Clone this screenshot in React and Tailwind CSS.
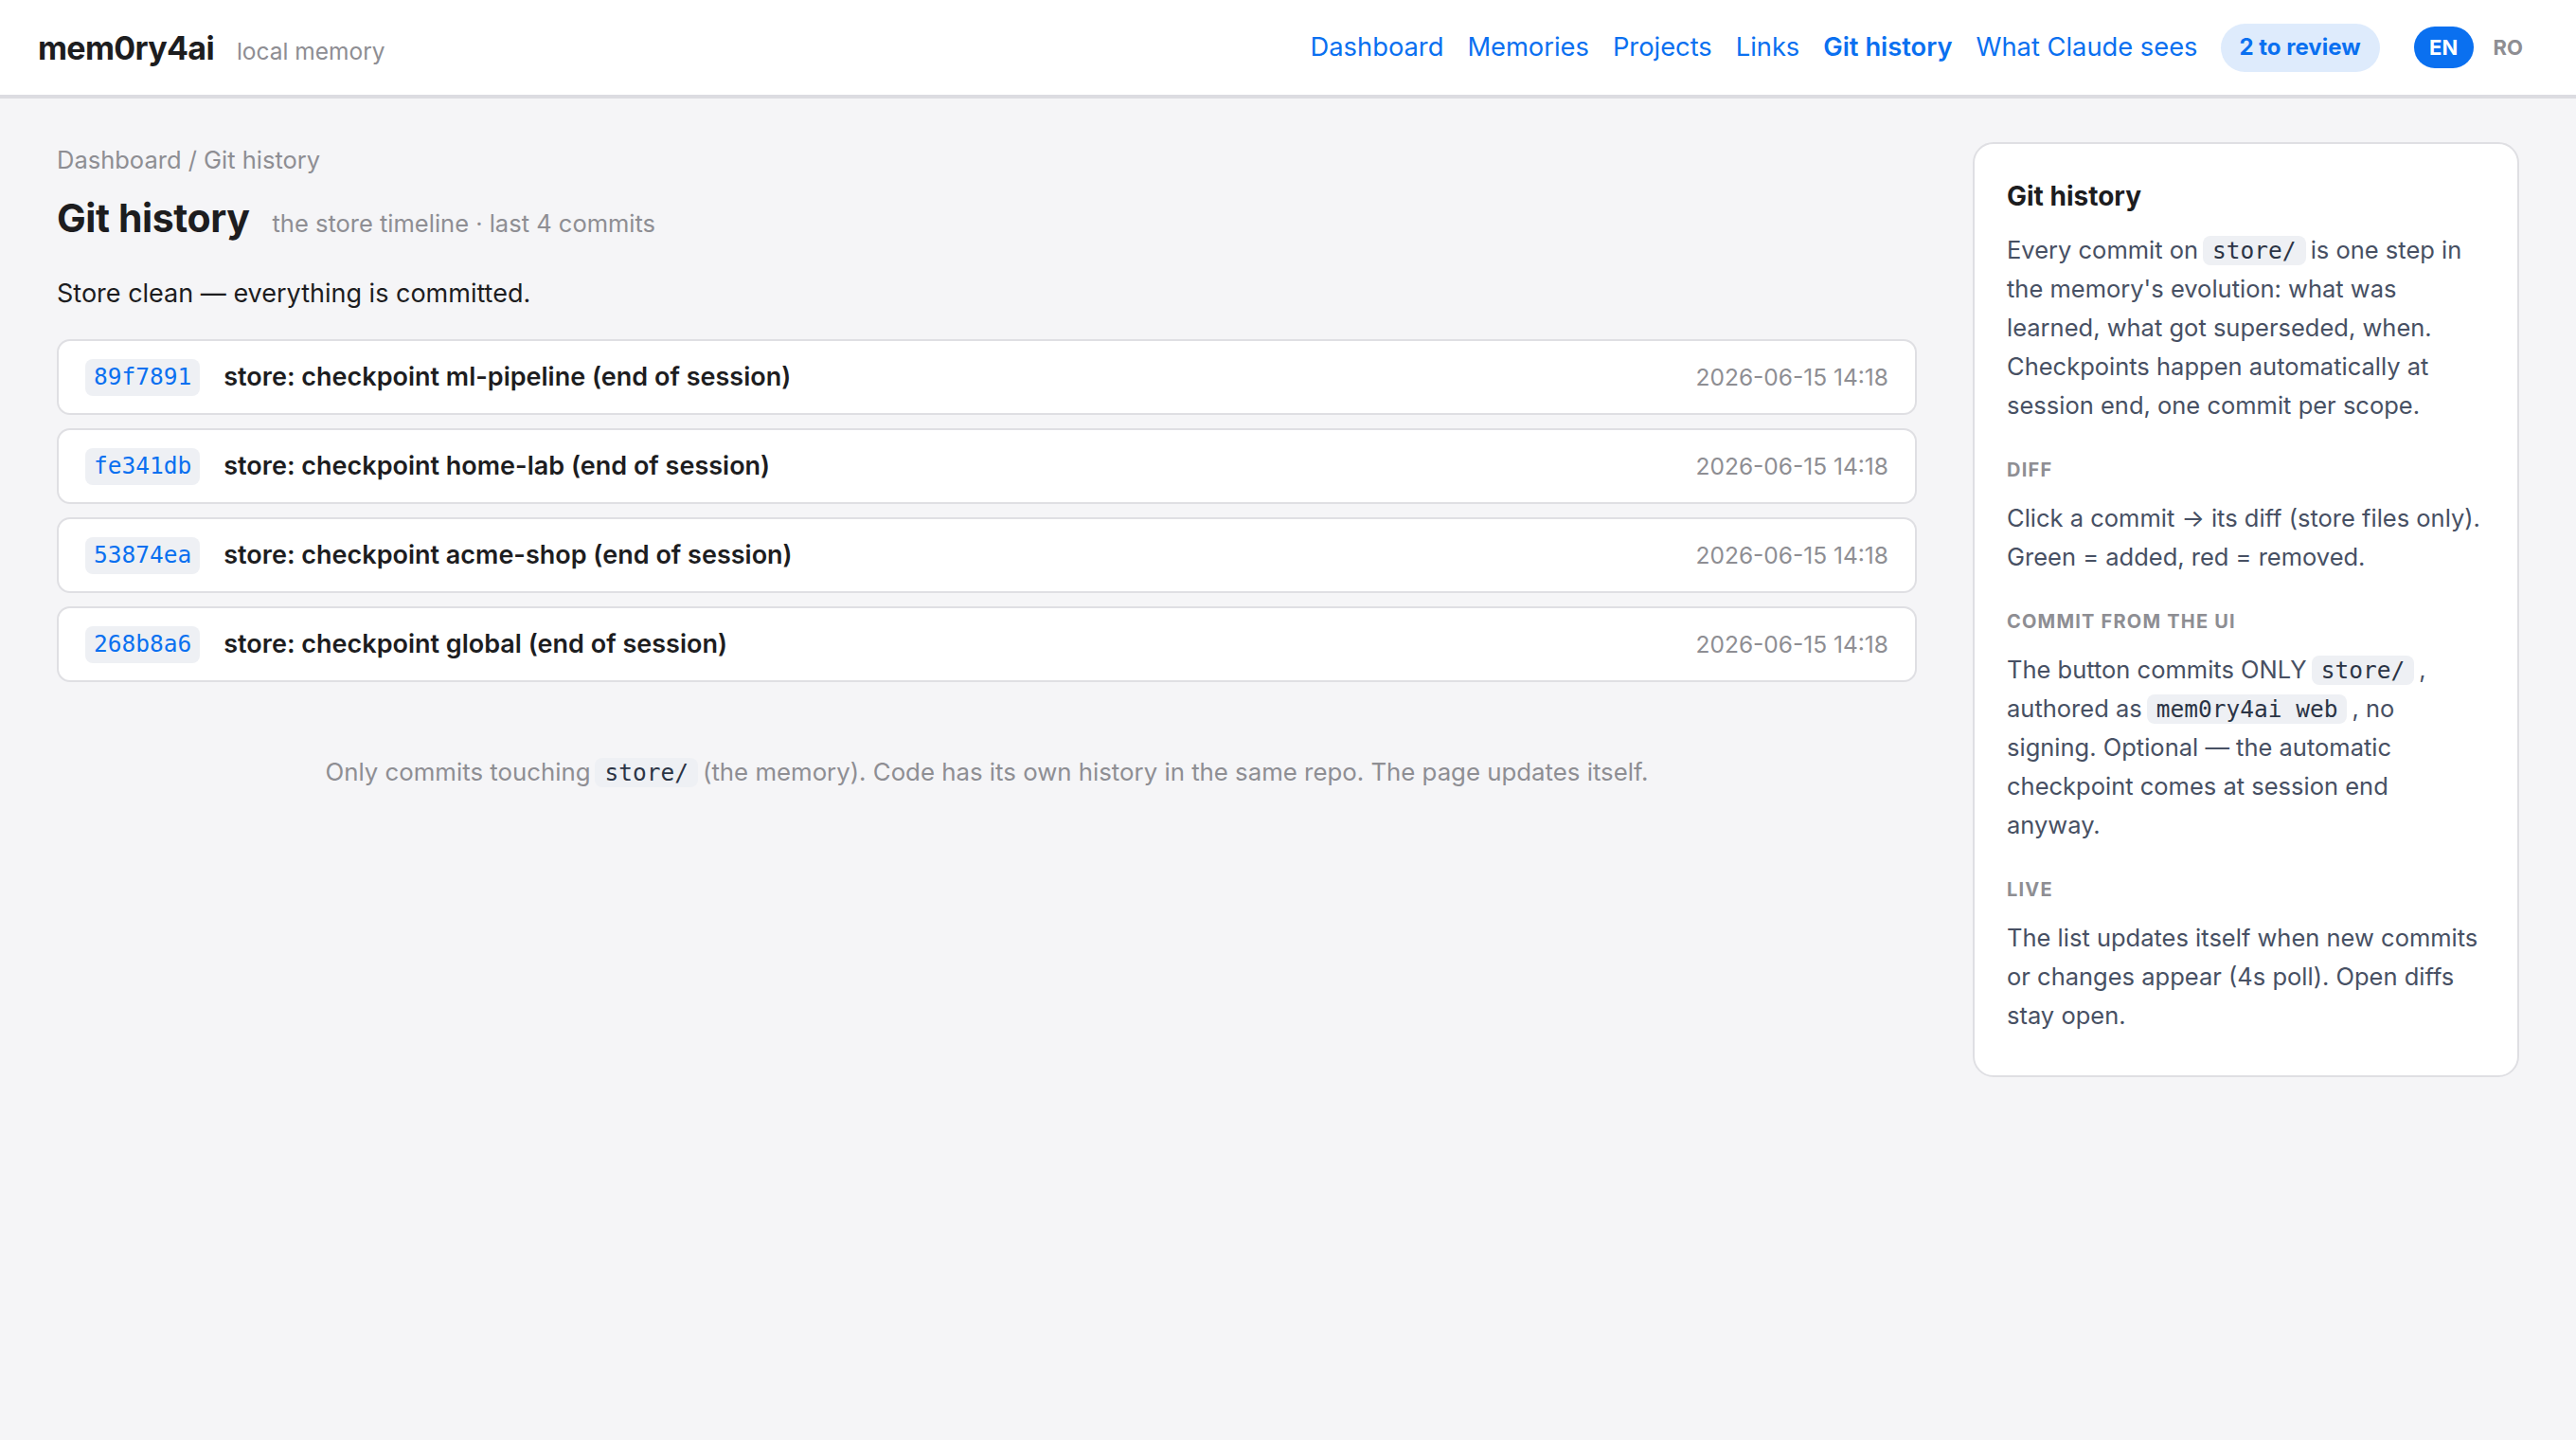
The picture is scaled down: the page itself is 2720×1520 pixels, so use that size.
import React from 'react';

const commits = [
  { hash: '89f7891', msg: 'store: checkpoint ml-pipeline (end of session)', date: '2026-06-15 14:18' },
  { hash: 'fe341db', msg: 'store: checkpoint home-lab (end of session)', date: '2026-06-15 14:18' },
  { hash: '53874ea', msg: 'store: checkpoint acme-shop (end of session)', date: '2026-06-15 14:18' },
  { hash: '268b8a6', msg: 'store: checkpoint global (end of session)', date: '2026-06-15 14:18' },
];

const navLinks = ['Dashboard', 'Memories', 'Projects', 'Links', 'Git history', 'What Claude sees'];

function Code({ children }) {
  return (
    <code className="font-['DejaVu_Sans_Mono',monospace] text-[24.5px] leading-[30px] bg-[#eef0f4] text-[#2b3445] rounded-[8px] px-[10px] py-[1px] mx-[5px]">
      {children}
    </code>
  );
}

function SideHeading({ children }) {
  return (
    <div className="mt-[33px] mb-[15px] text-[20px] leading-[30px] font-bold uppercase tracking-[0.06em] text-[#8e8e93]">
      {children}
    </div>
  );
}

export default function App() {
  return (
    <div className="min-h-screen bg-[#f5f5f7] font-['Inter',sans-serif] text-[#1d1d1f]">
      {/* header */}
      <header className="h-[104px] bg-white border-b-[4px] border-[#dcdce1] px-[40px] flex items-center justify-between">
        <div className="flex items-baseline gap-[24px]">
          <span className="text-[34px] font-bold tracking-[-0.02em]">mem0ry4ai</span>
          <span className="text-[24.5px] text-[#8e8e93]">local memory</span>
        </div>
        <nav className="flex items-center">
          <div className="flex items-center gap-[25px] text-[27.3px] text-[#0a70f0]">
            {navLinks.map((l) => (
              <a key={l} className={l === 'Git history' ? 'font-semibold' : ''}>
                {l}
              </a>
            ))}
          </div>
          <span className="ml-[24px] h-[51px] px-[20px] flex items-center rounded-full bg-[#deebfc] text-[#0a70f0] text-[24px] font-bold">
            2 to review
          </span>
          <span className="ml-[36px] w-[63px] h-[44px] flex items-center justify-center rounded-full bg-[#0a70f0] text-white text-[22px] font-bold">
            EN
          </span>
          <span className="ml-[21px] mr-[16px] text-[22px] font-bold text-[#8e8e93]">RO</span>
        </nav>
      </header>

      <div className="flex items-start gap-[59px] px-[60px] pt-[46px]">
        {/* main column */}
        <main className="flex-1">
          <div className="text-[25.5px] leading-[38px] text-[#8e8e93]">Dashboard / Git history</div>
          <div className="mt-[16px] flex items-baseline gap-[24px]">
            <h1 className="text-[41px] leading-[52px] font-bold tracking-[-0.01em]">Git history</h1>
            <span className="text-[25.5px] text-[#8e8e93]">the store timeline · last 4 commits</span>
          </div>
          <p className="mt-[34px] text-[27px] leading-[40px]">Store clean — everything is committed.</p>

          <div className="mt-[28px] flex flex-col gap-[14px]">
            {commits.map((c) => (
              <div
                key={c.hash}
                className="h-[80px] bg-white border-[2px] border-[#dfdfe3] rounded-[14px] pl-[28px] pr-[28px] flex items-center"
              >
                <span className="font-['DejaVu_Sans_Mono',monospace] text-[24.5px] text-[#0a70f0] bg-[#eef0f4] rounded-[8px] h-[39px] px-[9px] flex items-center">
                  {c.hash}
                </span>
                <span className="ml-[25px] text-[27px] font-semibold">{c.msg}</span>
                <span className="ml-auto text-[24.5px] text-[#8e8e93]">{c.date}</span>
              </div>
            ))}
          </div>

          <p className="mt-[75px] text-center text-[25.8px] leading-[40px] text-[#8e8e93]">
            Only commits touching<Code>store/</Code>(the memory). Code has its own history in the same repo. The page updates itself.
          </p>
        </main>

        {/* sidebar */}
        <aside className="w-[577px] shrink-0 bg-white border-[2px] border-[#dfdfe3] rounded-[22px] px-[34px] pt-[35px] pb-[43px] text-[25.5px] leading-[41px] text-[#475063]">
          <h2 className="text-[28px] leading-[40px] font-bold text-[#1d1d1f]">Git history</h2>
          <p className="mt-[16px]">
            Every commit on<Code>store/</Code>is one step in the memory's evolution: what was learned, what got superseded, when. Checkpoints happen automatically at session end, one commit per scope.
          </p>

          <SideHeading>Diff</SideHeading>
          <p>Click a commit → its diff (store files only). Green = added, red = removed.</p>

          <SideHeading>Commit from the UI</SideHeading>
          <p>
            The button commits ONLY<Code>store/</Code>, authored as<Code>mem0ry4ai web</Code>, no signing. Optional — the automatic checkpoint comes at session end anyway.
          </p>

          <SideHeading>Live</SideHeading>
          <p>The list updates itself when new commits or changes appear (4s poll). Open diffs stay open.</p>
        </aside>
      </div>
    </div>
  );
}
